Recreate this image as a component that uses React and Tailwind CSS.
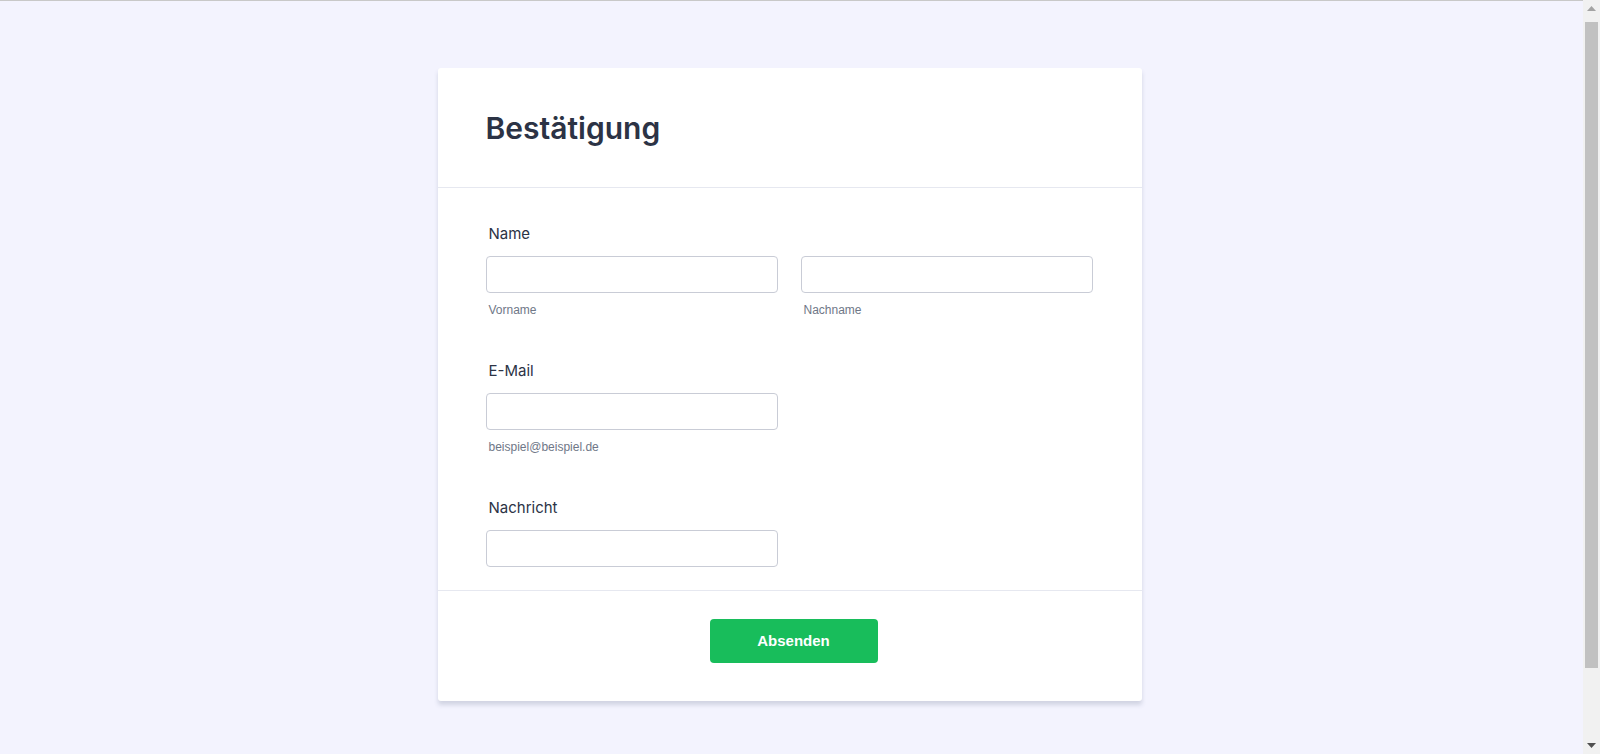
// Bestätigung — simple contact form card

const fieldLabel = "block pl-[3px] text-[15px] leading-5 font-normal text-[#2c3345] mb-3";
const inputBox =
  "block w-[292px] h-[37px] rounded-[4px] border border-[#c9ccd6] bg-white px-3 text-[15px] text-[#2c3345] outline-none";
const subLabel = "block pl-[3px] mt-[9px] text-[12px] leading-4 text-[#6f7787] font-['Liberation_Sans',Arial,sans-serif]";

function Field({ label, sub, className = "" }) {
  return (
    <div className={className}>
      <label className={fieldLabel}>{label}</label>
      <input type="text" className={inputBox} />
      {sub && <span className={subLabel}>{sub}</span>}
    </div>
  );
}

// classic window scrollbar, as seen in the screenshot
function Scrollbar() {
  return (
    <div className="fixed top-0 right-0 h-screen w-[17px] bg-[#f1f1f1] flex flex-col items-center">
      <div className="h-[17px] w-full flex items-center justify-center">
        <svg width="9" height="5" viewBox="0 0 9 5"><path d="M4.5 0L9 5H0z" fill="#a3a3a3" /></svg>
      </div>
      <div className="flex-1 w-full px-[2px] pt-[5px] pb-[69px]">
        <div className="h-full w-full bg-[#c1c1c1]" />
      </div>
      <div className="h-[17px] w-full flex items-center justify-center">
        <svg width="9" height="5" viewBox="0 0 9 5"><path d="M0 0H9L4.5 5z" fill="#505050" /></svg>
      </div>
    </div>
  );
}

export default function App() {
  return (
    <div className="min-h-screen bg-[#f3f3fe] border-t border-[#c8c8c8] pr-[21px] font-['Inter',sans-serif]">
      <div className="pt-[67px] pb-[139px] flex justify-center">
        <form className="w-[704px] bg-white rounded-[3px] shadow-[0_4px_4px_rgba(87,100,126,0.21)]">
          {/* ── Header ── */}
          <div className="px-12 pt-[41px] pb-10 border-b border-[#e6e8f0]">
            <h1 className="text-[30px] leading-[38px] font-semibold text-[#2c3345]">Bestätigung</h1>
          </div>

          {/* ── Fields ── */}
          <div className="px-12 pt-9 pb-[23px] flex flex-col gap-[43px]">
            <div>
              <label className={fieldLabel}>Name</label>
              <div className="flex gap-[23px]">
                <div>
                  <input type="text" className={inputBox} />
                  <span className={subLabel}>Vorname</span>
                </div>
                <div>
                  <input type="text" className={inputBox} />
                  <span className={subLabel}>Nachname</span>
                </div>
              </div>
            </div>
            <Field label="E-Mail" sub="beispiel@beispiel.de" />
            <Field label="Nachricht" />
          </div>

          {/* ── Submit ── */}
          <div className="border-t border-[#e6e8f0] pt-7 pb-[38px] pl-2 flex justify-center">
            <button
              type="button"
              className="w-[168px] h-[44px] rounded-[4px] bg-[#18bd5b] text-white text-[15px] font-bold font-['Liberation_Sans',Arial,sans-serif]"
            >
              Absenden
            </button>
          </div>
        </form>
      </div>
      <Scrollbar />
    </div>
  );
}
